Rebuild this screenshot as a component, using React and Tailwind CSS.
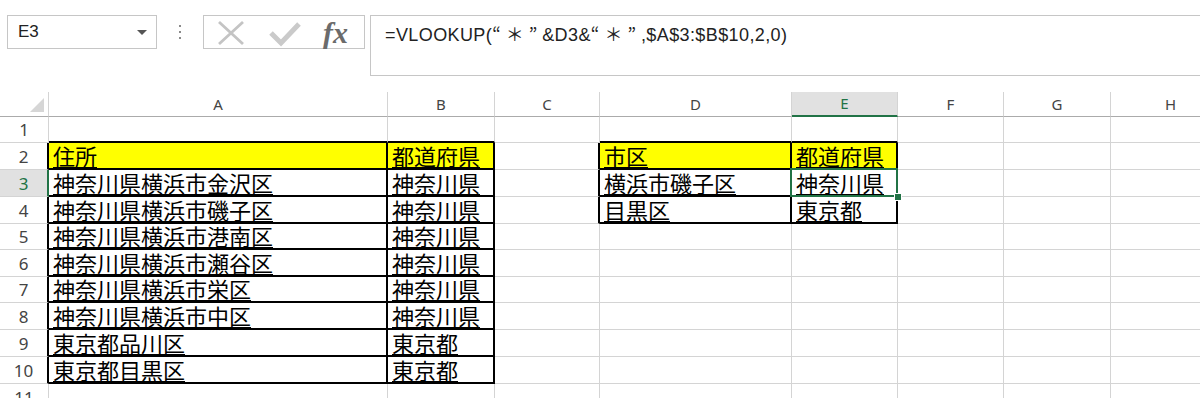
import React from "react";

const colWidths = [49, 339, 107, 105, 192, 106, 106, 107, 120];
const colLetters = ["A", "B", "C", "D", "E", "F", "G", "H"];
const rowHeights = [26, 27, 27, 27, 26, 27, 26, 27, 27, 27, 27];

const data = {
  2: ["住所", "都道府県", "", "市区", "都道府県"],
  3: ["神奈川県横浜市金沢区", "神奈川県", "", "横浜市磯子区", "神奈川県"],
  4: ["神奈川県横浜市磯子区", "神奈川県", "", "目黒区", "東京都"],
  5: ["神奈川県横浜市港南区", "神奈川県"],
  6: ["神奈川県横浜市瀬谷区", "神奈川県"],
  7: ["神奈川県横浜市栄区", "神奈川県"],
  8: ["神奈川県横浜市中区", "神奈川県"],
  9: ["東京都品川区", "東京都"],
  10: ["東京都目黒区", "東京都"],
};

const inTable = (r, c) =>
  (r >= 2 && r <= 10 && c >= 0 && c <= 1) || (r >= 2 && r <= 4 && c >= 3 && c <= 4);

const isYellow = (r, c) => r === 2 && (c === 0 || c === 1 || c === 3 || c === 4);

const cjk = { fontFamily: '"Noto Sans CJK JP", "Liberation Sans", sans-serif' };

function Cell({ r, c }) {
  const rightBlack = inTable(r, c) || inTable(r, c + 1);
  const bottomBlack = inTable(r, c) || inTable(r + 1, c);
  const text = (data[r] && data[r][c]) || "";
  const active = r === 3 && c === 4;
  return (
    <div
      className={`relative shrink-0 flex items-end pl-[4px] pb-[1px] overflow-visible whitespace-nowrap ${
        rightBlack ? "border-r-2 border-r-black" : "border-r border-r-[#d4d4d4]"
      } ${bottomBlack ? "border-b-2 border-b-black" : "border-b border-b-[#d4d4d4]"} ${
        isYellow(r, c) ? "bg-[#ffff00]" : "bg-white"
      }`}
      style={{ width: colWidths[c + 1] }}
    >
      {text && (
        <span
          className="text-[22px] leading-[23px] text-black underline decoration-1 underline-offset-[2px]"
          style={cjk}
        >
          {text}
        </span>
      )}
      {active && (
        <>
          <div className="absolute -left-[2px] -top-[2px] -right-[2px] -bottom-[2px] border-2 border-[#217346] z-10" />
          <div className="absolute -right-[6px] -bottom-[6px] w-[8px] h-[8px] bg-[#217346] border border-white z-20" />
        </>
      )}
    </div>
  );
}

function Toolbar() {
  return (
    <div className="flex items-start pt-[15px] h-[92px]">
      <div className="ml-[7px] w-[150px] h-[34px] border border-[#c6c6c6] flex items-center justify-between pl-[10px] pr-[9px] shrink-0">
        <span className="text-[17px] text-[#222]" style={{ fontFamily: '"Liberation Sans", sans-serif' }}>
          E3
        </span>
        <span className="w-0 h-0 border-l-[5px] border-r-[5px] border-t-[5px] border-l-transparent border-r-transparent border-t-[#555]" />
      </div>
      <div className="w-[46px] h-[34px] flex flex-col items-center justify-center gap-[4px] shrink-0">
        <span className="w-[2px] h-[2px] bg-[#8a8a8a]" />
        <span className="w-[2px] h-[2px] bg-[#8a8a8a]" />
        <span className="w-[2px] h-[2px] bg-[#8a8a8a]" />
      </div>
      <div className="w-[162px] h-[34px] border border-[#c6c6c6] flex items-center shrink-0">
        <svg width="160" height="32" viewBox="0 0 160 32" className="shrink-0 overflow-visible">
          <path d="M15 6 L39 28 M39 6 L15 28" stroke="#c4c4c4" strokeWidth="2.8" fill="none" />
          <path d="M67 17 L77 27 L95 8" stroke="#cacaca" strokeWidth="5" fill="none" strokeLinejoin="miter" />
          <text
            x="119"
            y="27"
            fontFamily='"Liberation Serif", serif'
            fontStyle="italic"
            fontWeight="bold"
            fontSize="30"
            fill="#6b6b6b"
          >
            fx
          </text>
        </svg>
      </div>
      <div className="ml-[5px] flex-1 h-[61px] border-l border-t border-b border-[#c6c6c6] pl-[14px] pt-[4px]">
        <span
          className="text-[18px] text-[#222] tracking-[0.4px]"
          style={{ fontFamily: '"Liberation Sans", sans-serif' }}
        >
          =VLOOKUP(<span className="tracking-[5px]" style={cjk}>“＊”</span>&amp;D3&amp;
          <span className="tracking-[5px]" style={cjk}>“＊”</span>,$A$3:$B$10,2,0)
        </span>
      </div>
    </div>
  );
}

function HeaderRow() {
  return (
    <div className="flex h-[25px]">
      <div
        className="shrink-0 relative border-r border-r-[#d4d4d4] border-b border-b-[#ababab]"
        style={{ width: colWidths[0] }}
      >
        <svg width="16" height="16" className="absolute left-[29px] top-[5px]">
          <path d="M15 1 L15 15 L1 15 Z" fill="#d6d6d6" />
        </svg>
      </div>
      {colLetters.map((l, i) => (
        <div
          key={l}
          className={`shrink-0 flex items-center justify-center text-[15px] border-r border-r-[#d4d4d4] ${
            i === 4
              ? "bg-[#e1e1e1] text-[#217346] border-b-2 border-b-[#217346]"
              : "text-[#444] border-b border-b-[#ababab]"
          }`}
          style={{ width: colWidths[i + 1], fontFamily: '"Noto Sans", sans-serif' }}
        >
          {l}
        </div>
      ))}
    </div>
  );
}

export default function App() {
  const rows = rowHeights.map((h, idx) => idx + 1);
  return (
    <div className="w-[1200px] h-[398px] overflow-hidden bg-white">
      <Toolbar />
      <HeaderRow />
      {rows.map((r) => (
        <div key={r} className="flex" style={{ height: rowHeights[r - 1] }}>
          <div
            className={`shrink-0 flex items-end justify-center pb-[1px] text-[17px] leading-[22px] border-b border-b-[#d4d4d4] ${
              r === 3
                ? "bg-[#e1e1e1] text-[#217346] border-r-2 border-r-[#217346]"
                : r >= 2 && r <= 10
                ? "text-[#444] border-r-2 border-r-black"
                : "text-[#444] border-r border-r-[#d4d4d4]"
            }`}
            style={{ width: colWidths[0], fontFamily: '"Noto Sans", sans-serif' }}
          >
            {r}
          </div>
          {colLetters.map((l, c) => (
            <Cell key={l} r={r} c={c} />
          ))}
        </div>
      ))}
    </div>
  );
}
